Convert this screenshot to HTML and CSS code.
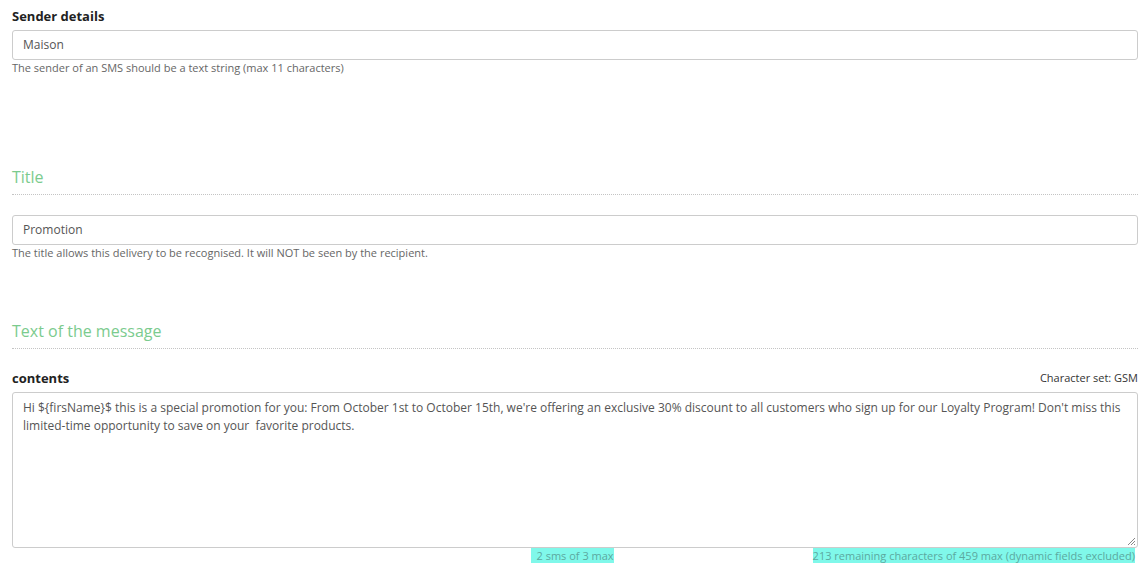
FILE: index.html
```html
<!DOCTYPE html>
<html>
<head>
<meta charset="utf-8">
<link rel="stylesheet" href="styles.css">
</head>
<body>
<div class="page">
  <div class="field-label">Sender details</div>
  <div class="input">Maison</div>
  <div class="help">The sender of an SMS should be a text string (max 11 characters)</div>

  <h2 class="section-title first">Title</h2>
  <div class="input spaced">Promotion</div>
  <div class="help">The title allows this delivery to be recognised. It will NOT be seen by the recipient.</div>

  <h2 class="section-title second">Text of the message</h2>
  <div class="label-row">
    <div class="field-label">contents</div>
    <div class="charset">Character set: GSM</div>
  </div>
  <div class="textarea">Hi ${firsName}$ this is a special promotion for you: From October 1st to October 15th, we're offering an exclusive 30% discount to all customers who sign up for our Loyalty Program! Don't miss this limited-time opportunity to save on your&nbsp; favorite products.<svg class="grip" width="9" height="9" viewBox="0 0 9 9"><path d="M8 1L1 8M8 4L4 8M8 7L7 8" stroke="#888" stroke-width="1" fill="none"/></svg></div>
  <div class="counts">
    <span class="count sms">2 sms of 3 max</span>
    <span class="count">213 remaining characters of 459 max (dynamic fields excluded)</span>
  </div>
</div>
</body>
</html>
```
FILE: styles.css
```css
html, body {
  margin: 0;
  padding: 0;
  background: #fff;
}
body {
  font-family: "Open Sans", "Liberation Sans", sans-serif;
  color: #333;
}
.page {
  padding: 7px 9px 0 12px;
}
.field-label {
  font-size: 13px;
  font-weight: 700;
  line-height: 18px;
  color: #222;
}
.input {
  margin-top: 5px;
  height: 28px;
  border: 1px solid #ccc;
  border-radius: 3px;
  padding: 0 10px;
  font-size: 12px;
  line-height: 28px;
  color: #555;
}
.input.spaced {
  margin-top: 20px;
}
.help {
  font-size: 11px;
  line-height: 16px;
  color: #666;
}
.section-title {
  margin: 0;
  font-weight: 400;
  font-size: 16px;
  line-height: 24px;
  color: #7bcb8e;
  padding-bottom: 5px;
  border-bottom: 1px dotted #c4c4c4;
}
.section-title.first {
  margin-top: 89px;
}
.section-title.second {
  margin-top: 58px;
}
.label-row {
  margin-top: 20px;
  display: flex;
  justify-content: space-between;
  align-items: center;
}
.charset {
  font-size: 11px;
  line-height: 18px;
  color: #333;
}
.textarea {
  position: relative;
  margin-top: 5px;
  box-sizing: content-box;
  border: 1px solid #ccc;
  border-radius: 3px;
  padding: 6px 10px 0;
  height: 148px;
  font-size: 12px;
  line-height: 18px;
  color: #555;
}
.grip {
  position: absolute;
  right: 1px;
  bottom: 1px;
}
.counts {
  display: flex;
  justify-content: flex-end;
  gap: 199px;
  padding-right: 3px;
}
.count {
  background: #80f8ea;
  color: #5ca89f;
  font-size: 11px;
  line-height: 15px;
}
.count.sms {
  padding-left: 6px;
}
```
